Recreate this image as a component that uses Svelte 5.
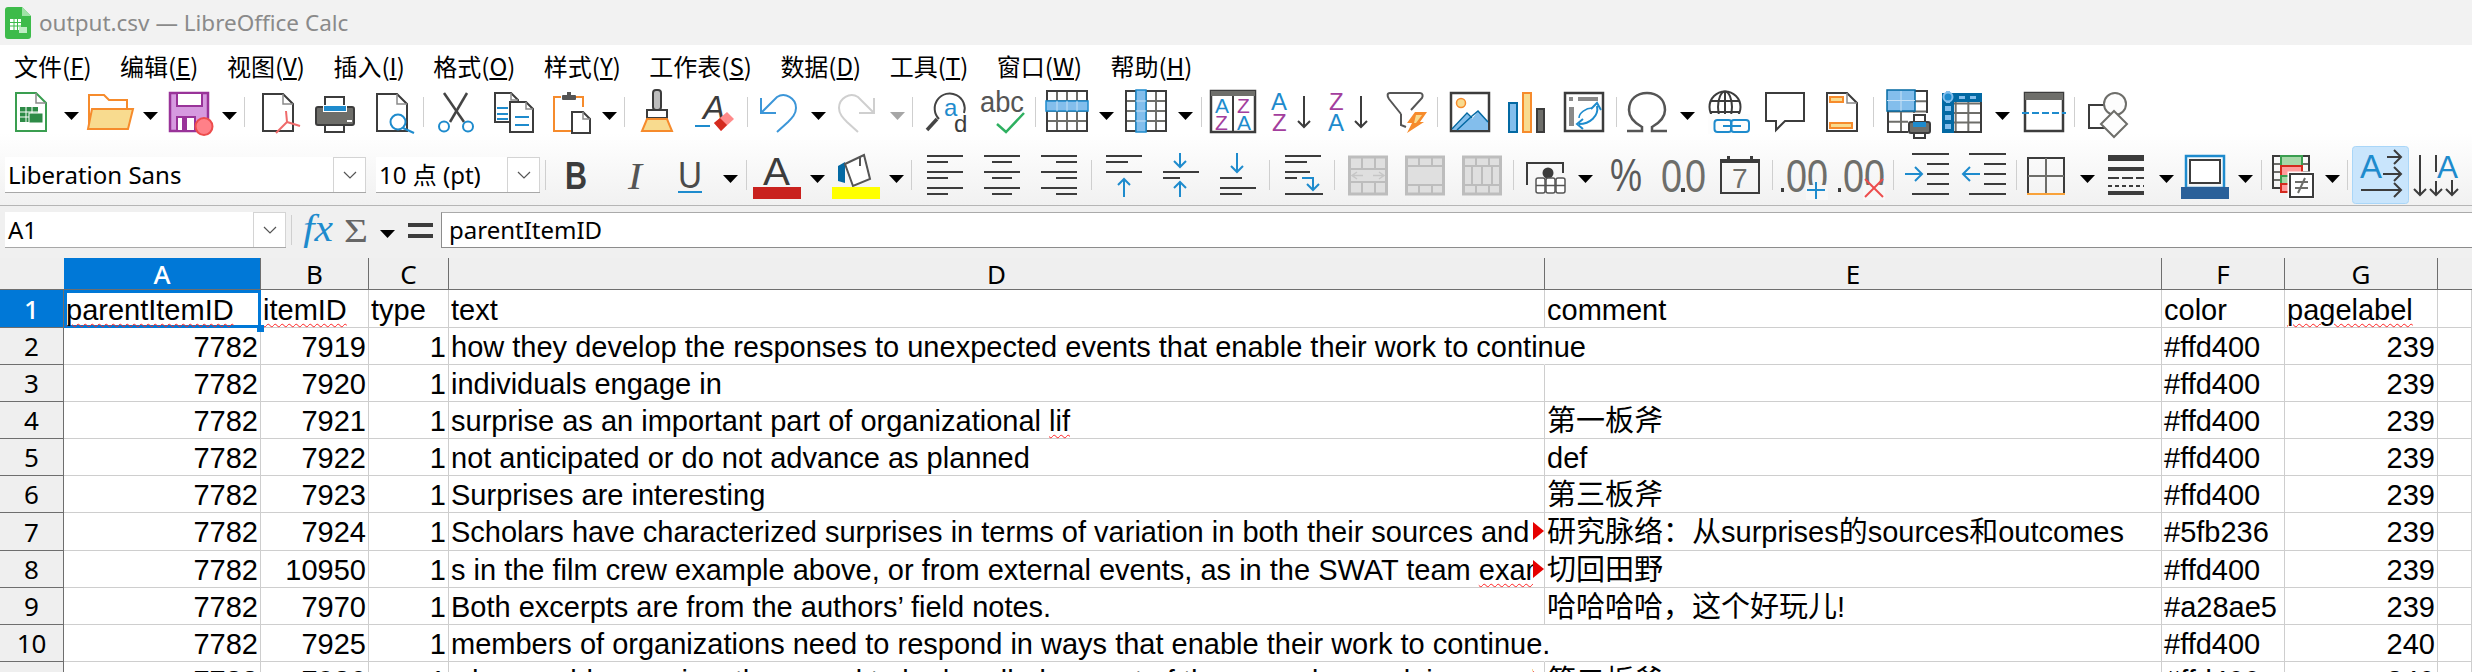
<script>
  const D = '#3c3c3c', M = '#6e6e6a', B = '#1e8bcd', DB = '#0369a3', LB = '#83beec';
  const O = '#f68b2c', LO = '#f8db8f', R = '#ed4c4c', P = '#a33e9d', GR = '#bdbdbd';

  const line = (x1, y1, x2, y2, c = D, w = 2) =>
    `<line x1="${x1}" y1="${y1}" x2="${x2}" y2="${y2}" stroke="${c}" stroke-width="${w}"/>`;
  const path = (d, c = D, w = 2, f = 'none') =>
    `<path d="${d}" stroke="${c}" stroke-width="${w}" fill="${f}"/>`;
  const rect = (x, y, w, h, c = 'none', sw = 0, f = 'none', r = 0) =>
    `<rect x="${x}" y="${y}" width="${w}" height="${h}" stroke="${c}" stroke-width="${sw}" fill="${f}" rx="${r}"/>`;
  const txt = (s, x, y, size, f = D, extra = '') =>
    `<text x="${x}" y="${y}" font-size="${size}" fill="${f}" font-family="Liberation Sans, sans-serif" ${extra}>${s}</text>`;
  const doc = (x0, y0, x1, y1, c = D, f = 'none', fold = 10) =>
    path(`M${x0} ${y0}H${x1 - fold}L${x1} ${y0 + fold}V${y1}H${x0}Z`, c, 2, f) +
    path(`M${x1 - fold} ${y0}V${y0 + fold}H${x1}`, '#8a8a8a', 1.5);
  const grid = (x, y, w, h, nx, ny, inner = M, outer = D) => {
    let s = '';
    for (let i = 1; i < nx; i++) s += line(x + (w * i) / nx, y, x + (w * i) / nx, y + h, inner);
    for (let i = 1; i < ny; i++) s += line(x, y + (h * i) / ny, x + w, y + (h * i) / ny, inner);
    return s + rect(x, y, w, h, outer, 2);
  };
  const hlines = (list) => list.map(([a, b, y]) => line(a, y, b, y)).join('');
  const arrowV = (x, y0, y1, c = B) => {
    const d = y1 > y0 ? -1 : 1;
    return line(x, y0, x, y1, c) + path(`M${x - 6} ${y1 + d * 6}L${x} ${y1}L${x + 6} ${y1 + d * 6}`, c);
  };
  const arrowH = (x0, x1, y, c = B) => {
    const d = x1 > x0 ? -1 : 1;
    return line(x0, y, x1, y, c) + path(`M${x1 + d * 7} ${y - 7}L${x1} ${y}L${x1 + d * 7} ${y + 7}`, c);
  };
  const mergeBase = (inner) => rect(1.5, 17, 37, 37, GR, 3, '#dfdfdf') + inner;
  const zero = (x, w = 21) => txt('0', x, 52, 46, M, `textLength="${w}" lengthAdjust="spacingAndGlyphs"`);

  const icons = {
    arr: `<polygon points="0,26 15,26 7.5,34" fill="#000"/>`,
    arrg: `<polygon points="0,26 15,26 7.5,34" fill="#a6a6a6"/>`,
    arr2: `<polygon points="0,35 15,35 7.5,43" fill="#000"/>`,
    sep: line(0.5, 11, 0.5, 41, '#cfcfcf', 1),
    sep2: line(0.5, 20, 0.5, 50, '#cfcfcf', 1),

    new:
      doc(1, 7, 31, 45, '#3a9e50', '#fff') +
      rect(5, 21, 18, 15, 'none', 0, '#2e8b47') +
      line(5, 26, 23, 26, '#fff', 1) + line(5, 31, 23, 31, '#fff', 1) +
      line(11, 21, 11, 36, '#fff', 1) + line(17, 21, 17, 36, '#fff', 1) +
      rect(14, 27, 14, 10, '#fff', 1, '#2e8b47'),
    open:
      path('M1 43V9H16L21 14H39V22', O, 2) +
      path('M4 23H45L40 43H0Z', O, 2, LO),
    save:
      rect(1, 7, 38, 38, '#993399', 2.5, '#d69adf') +
      rect(8, 7, 25, 13, '#993399', 2, '#fff') +
      rect(8, 31, 18, 14, '#993399', 2, '#fff') +
      rect(13, 32, 5, 13, 'none', 0, '#993399') +
      `<circle cx="35" cy="40.5" r="8.5" fill="#ff8088" stroke="#ed4c4c" stroke-width="2"/>`,
    pdf:
      doc(1, 8, 31, 45) +
      line(25, 36, 14, 47, '#ef6a6a') + line(25, 36, 38, 40, '#ef6a6a') + line(25, 36, 24, 25, '#ef6a6a'),
    print:
      rect(10, 11, 19, 12, D, 2, '#fff') +
      rect(1, 21, 38, 18, D, 2, M, 2) +
      rect(8, 19, 24, 7, 'none', 0, '#fff') + rect(9, 20, 22, 5, 'none', 0, B) +
      rect(10, 39, 19, 7, D, 2, '#fff') +
      rect(32, 34, 5, 2, 'none', 0, '#fff'),
    preview:
      doc(1, 8, 31, 45) +
      `<circle cx="22" cy="36" r="7.5" fill="#fff" stroke="${B}" stroke-width="2"/>` + line(27, 42, 38, 47, B),
    cut:
      line(6, 7, 26, 36, '#444', 2.5) + line(29, 7, 12, 36, '#444', 2.5) +
      `<circle cx="6" cy="40.5" r="5" fill="#fff" stroke="${B}" stroke-width="2"/>` +
      `<circle cx="30" cy="40.5" r="5" fill="#fff" stroke="${B}" stroke-width="2"/>`,
    copy:
      doc(1, 7, 24, 36, D, '#fff', 7) +
      line(3, 22, 14, 22, B) + line(3, 28, 14, 28, B) + line(3, 33, 14, 33, B) +
      doc(16, 16, 39, 46, D, '#fff', 7) +
      line(21, 31, 35, 31, B) + line(21, 39, 35, 39, B),
    paste:
      path('M8 11H1V45H18', O, 2) + path('M23 11H30V21', O, 2) +
      rect(9, 9, 14, 5, 'none', 0, '#555', 1) + rect(14, 6, 4, 4, 'none', 0, '#555') +
      doc(19, 26, 37, 47, D, '#fff', 7),
    clone:
      rect(11, 4, 8, 20, D, 2, GR, 3) +
      rect(5, 24, 20, 8, D, 2, '#fff') +
      path('M5 33H25L30 45H0Z', O, 2, LO),
    clear:
      txt('A', 8, 33, 33, D, 'font-style="italic"') +
      line(0, 40, 15, 40, B) +
      `<polygon points="19,37 32,26 39,33 26,45" fill="#ff8a8a"/>` +
      `<polygon points="19,37 25,32 32,39 26,45" fill="#d42a1e"/>`,
    undo:
      path('M1 12V27H16', '#3c96d8') + path('M1 27L17 11C25 6 36 12 36 22C36 28 32 32 28 36L17 46', '#3c96d8'),
    redo:
      path('M35 12V27H20', '#cfcfcf') + path('M35 27L19 11C11 6 0 12 0 22C0 28 4 32 8 36L19 46', '#cfcfcf'),
    find:
      path('M13 33A15 15 0 1 1 38 27', '#444', 2) +
      line(11, 33, 1, 44, '#444', 3.5) +
      txt('a', 18, 30, 24, B) + txt('d', 28, 46, 24, D),
    spell:
      txt('abc', 0, 26, 30, '#555', 'textLength="44" lengthAdjust="spacingAndGlyphs"') + path('M17 38L26 46L44 27', '#2eb060', 2.5),
    rowt:
      grid(1, 5, 40, 40, 4, 4) + rect(0, 15, 42, 10, B, 1.5, LB) + line(11, 15, 11, 25, '#c7e1f6', 1) + line(21, 15, 21, 25, '#c7e1f6', 1) + line(31, 15, 31, 25, '#c7e1f6', 1),
    colt:
      grid(1, 5, 40, 40, 4, 4) + rect(11, 4, 10, 42, B, 1.5, LB) + line(11, 15, 21, 15, '#c7e1f6', 1) + line(11, 25, 21, 25, '#c7e1f6', 1) + line(11, 35, 21, 35, '#c7e1f6', 1),
    autosort:
      rect(1, 5, 44, 41, D, 2.5, '#fff') + rect(1, 5, 44, 5, 'none', 0, M) +
      line(23, 10, 23, 46) +
      txt('A', 5, 27, 21, B) + txt('Z', 5, 44, 21, P) + txt('Z', 27, 27, 21, P) + txt('A', 27, 44, 21, B),
    sorta:
      txt('A', 0, 24, 24, B) + txt('Z', 1, 45, 24, P) + arrowV(33, 10, 41, D),
    sortd:
      txt('Z', 1, 24, 24, P) + txt('A', 0, 45, 24, B) + arrowV(33, 10, 41, D),
    filter:
      path('M3 7H33C36 7 36 10 35 12L24 24M14 28V39L19 41M14 28L2 13C0 10 0 7 3 7', '#555') +
      `<polygon points="28,26 40,26 33,36 37,36 20,47 25,37 20,37" fill="${O}"/>` +
      `<polygon points="29,29 35,29 29,37 27,37" fill="${LO}"/>`,
    image:
      rect(1, 7, 38, 38, D, 2.5, '#fff') +
      `<circle cx="11" cy="17" r="4.5" fill="${LO}" stroke="${O}" stroke-width="1.5"/>` +
      `<polygon points="2,44 17,28 22,33 28,25 38,36 38,44" fill="${LB}"/>` +
      path('M2 43L17 27L22 32M7 44L22 30L28 25L38 36', DB, 1.5),
    chart:
      rect(2, 17, 8, 29, DB, 2, LB) + rect(16, 7, 8, 39, O, 2, LO) + rect(30, 23, 7, 23, D, 2, M),
    pivot:
      rect(1, 7, 38, 38, D, 2.5, '#fff') +
      rect(5, 11, 4, 4, 'none', 0, '#8a8a8a') + rect(14, 11, 20, 4, 'none', 0, '#8a8a8a') +
      rect(5, 21, 5, 19, 'none', 0, '#8a8a8a') +
      path('M33 20C35 30 26 38 15 38', B) + path('M27 23L33 17L37 24', B) + path('M19 33L13 38L19 43', B) +
      path('M15 32C15 27 22 22 28 22', B, 1.5),
    omega:
      path('M0 45H15V41C6 36 2 30 2 24C2 13 10 7 20 7C30 7 38 13 38 24C38 30 34 36 25 41V45H40', '#555', 2.5),
    link:
      `<circle cx="17" cy="21" r="15.5" fill="none" stroke="${D}" stroke-width="2"/>` +
      `<ellipse cx="17" cy="21" rx="7" ry="15.5" fill="none" stroke="${D}" stroke-width="2"/>` +
      line(2, 15, 32, 15) + line(2, 26, 32, 26) + line(17, 6, 17, 34) +
      rect(0, 28, 42, 20, 'none', 0, '#fdfdfd') +
      rect(6.5, 34, 17, 12, B, 2, 'none', 3) + rect(23, 34, 18, 12, B, 2, 'none', 3) + line(15, 40, 33, 40, B),
    comment:
      path('M1 7H39V35H20L11 44V35H1Z', D, 2, '#fff'),
    header:
      doc(1, 7, 31, 45) +
      rect(4, 11, 13, 5, O, 2, LO) + rect(4, 37, 22, 5, O, 2, LO),
    printarea:
      grid(1, 5, 39, 41, 3, 4) +
      rect(0, 4, 28, 21, DB, 1.5, LB) + line(14, 5, 14, 25, '#c7e1f6', 1) + line(0, 14.5, 28, 14.5, '#c7e1f6', 1) +
      rect(21, 27, 22, 24, 'none', 0, '#fdfdfd') +
      rect(27, 29, 11, 9, D, 2, '#fff') + rect(22, 36, 21, 11, D, 2, M, 2) + rect(26, 36, 13, 5, 'none', 0, B) + rect(27, 47, 11, 5, D, 2, '#fff'),
    freeze:
      grid(1, 8, 38, 38, 3, 4) +
      rect(0, 7, 40, 9, 'none', 0, DB) + rect(0, 7, 12, 40, 'none', 0, DB) +
      [17, 28].map((x) => rect(x, 10, 6, 3, 'none', 0, LB)).join('') +
      [20, 29, 38].map((y) => rect(3, y, 6, 5, 'none', 0, LB)).join('') +
      rect(4, 5, 4, 12, 'none', 0, LB) +
      `<circle cx="6" cy="11" r="4.5" fill="${B}" stroke="#83beec" stroke-width="2"/>`,
    split:
      rect(3, 7, 38, 38, D, 2.5, '#fff') + rect(3, 7, 38, 7, 'none', 0, M) +
      `<line x1="0" y1="27" x2="44" y2="27" stroke="${B}" stroke-width="2" stroke-dasharray="7 3"/>`,
    shapes:
      rect(1, 19, 22, 23, D, 2, 'none') +
      `<circle cx="27" cy="18" r="11" fill="#fdfdfd" stroke="${M}" stroke-width="2"/>` +
      `<polygon points="26,25 39,38 26,51 13,38" fill="#fdfdfd" stroke="${M}" stroke-width="2"/>`,

    bold: txt('B', 0, 49, 38, D, 'font-weight="bold" textLength="22" lengthAdjust="spacingAndGlyphs"'),
    ital: txt('I', 0, 49, 38, '#555', 'font-style="italic" style="font-family:Liberation Serif,serif" textLength="14" lengthAdjust="spacingAndGlyphs"'),
    under:
      txt('U', 0, 48, 36, '#4a4a4a', 'textLength="24" lengthAdjust="spacingAndGlyphs"') + line(0, 52, 24, 52, B),
    fcolor:
      txt('A', 10, 45, 39, D, 'textLength="27" lengthAdjust="spacingAndGlyphs"') + rect(0, 47, 48, 12, 'none', 0, '#c9211e'),
    hcolor:
      `<polygon points="6,26 13,22 13,43 6,41" fill="${DB}"/>` +
      `<polygon points="13,24 32,15 38,39 21,46" fill="#fff" stroke="#555" stroke-width="2"/>` +
      path('M28 16V26', '#555') +
      rect(0, 47, 48, 12, 'none', 0, '#ffff00'),
    left: hlines([[0, 36, 16], [0, 21, 22], [0, 36, 32], [0, 21, 38], [0, 36, 48], [0, 21, 54]]),
    center: hlines([[0, 36, 16], [8, 28, 22], [0, 36, 32], [8, 28, 38], [0, 36, 48], [8, 28, 54]]),
    right: hlines([[0, 36, 16], [15, 36, 22], [0, 36, 32], [15, 36, 38], [0, 36, 48], [15, 36, 54]]),
    vtop: hlines([[0, 36, 16], [0, 22, 22], [0, 36, 32]]) + arrowV(18, 57, 39),
    vmid: hlines([[0, 36, 32], [0, 17, 38]]) + arrowV(17, 13, 27) + arrowV(17, 57, 42),
    vbot: hlines([[0, 22, 38], [0, 36, 48], [0, 22, 54]]) + arrowV(17, 13, 32),
    wrap:
      hlines([[0, 36, 16], [0, 22, 22], [0, 25, 32], [0, 12, 38], [0, 38, 54]]) +
      path('M17 38H28V49', B) + path('M22 44L28 50L34 44', B),
    merge1: mergeBase(
      line(2, 29, 38, 29, GR, 2) + line(2, 42, 38, 42, GR, 2) +
      line(14, 18, 14, 29, GR, 2) + line(27, 18, 27, 29, GR, 2) + line(14, 42, 14, 54, GR, 2) + line(27, 42, 27, 54, GR, 2) +
      path('M9 32L4 35.5L9 39M4 35.5H15M31 32L36 35.5L31 39M36 35.5H25', '#c6c6c6', 1.5)),
    merge2: mergeBase(
      line(2, 26, 38, 26, GR, 2) + line(2, 45, 38, 45, GR, 2) +
      line(14, 18, 14, 26, GR, 2) + line(27, 18, 27, 26, GR, 2) + line(14, 45, 14, 54, GR, 2) + line(27, 45, 27, 54, GR, 2)),
    merge3: mergeBase(
      line(2, 26, 38, 26, GR, 2) + line(2, 45, 38, 45, GR, 2) +
      line(14, 18, 14, 26, GR, 2) + line(27, 18, 27, 26, GR, 2) + line(14, 45, 14, 54, GR, 2) + line(27, 45, 27, 54, GR, 2) +
      line(10, 26, 10, 45, GR, 2) + line(20, 26, 20, 45, GR, 2) + line(30, 26, 30, 45, GR, 2)),
    money:
      path('M1 45V23H37V33', D, 2) +
      `<circle cx="22" cy="33" r="5.5" fill="${D}"/>` +
      rect(10, 38, 9, 15, '#555', 1.5, '#fff', 2) + rect(20, 38, 9, 15, '#555', 1.5, '#fff', 2) + rect(30, 38, 9, 15, '#555', 1.5, '#fff', 2) +
      line(10, 45.5, 39, 45.5, '#555', 1.5),
    percent: txt('%', 0, 51, 46, '#5a5a5a', 'textLength="32" lengthAdjust="spacingAndGlyphs"'),
    number: zero(0) + zero(24) + rect(20, 48, 4, 4, 'none', 0, D),
    date:
      rect(1, 20, 38, 33, D, 2, 'none') + rect(1, 19, 38, 4, 'none', 0, D) +
      rect(7, 16, 3, 6, 'none', 0, D) + rect(30, 16, 3, 6, 'none', 0, D) +
      txt('7', 12, 48, 28, M),
    adddec:
      rect(0, 48, 3, 4, 'none', 0, D) + zero(5) + zero(26) +
      rect(25, 45, 22, 15, 'none', 0, '#f7f7f7') +
      line(35, 42, 35, 59, B) + line(26, 50, 44, 50, B),
    deldec:
      rect(0, 48, 3, 4, 'none', 0, D) + zero(5) + zero(26) +
      rect(25, 45, 22, 15, 'none', 0, '#f7f7f7') +
      line(27, 39, 45, 57, R) + line(45, 39, 27, 57, R),
    indent:
      hlines([[7, 44, 14], [22, 44, 24], [22, 44, 34], [22, 44, 44], [7, 44, 54]]) + arrowH(0, 17, 34),
    outdent:
      hlines([[7, 44, 14], [22, 44, 24], [22, 44, 34], [22, 44, 44], [7, 44, 54]]) + arrowH(18, 1, 34),
    border:
      rect(1, 18, 36, 36, D, 2) + line(19, 18, 19, 54, M) + line(1, 36, 37, 36, M) + line(0, 54, 38, 54, '#f9a23a', 2),
    lines:
      rect(0, 15, 36, 6, 'none', 0, D) + rect(0, 27, 36, 4, 'none', 0, D) +
      `<line x1="0" y1="38" x2="36" y2="38" stroke="${D}" stroke-width="2" stroke-dasharray="11 3"/>` +
      `<line x1="0" y1="46" x2="36" y2="46" stroke="${D}" stroke-width="2" stroke-dasharray="4 3"/>` +
      rect(0, 51, 36, 4, 'none', 0, D),
    bcolor:
      rect(5, 16, 38, 32, B, 2.5) + rect(9, 20, 30, 23, D, 2, '#fff') + rect(0, 47, 48, 12, 'none', 0, '#2a6099'),
    cond:
      grid(1, 16, 36, 32, 3, 4) +
      rect(9, 16, 21, 10, '#3a9e50', 2, '#a6d8a8') + rect(9, 26, 21, 10, '#d42a1e', 2, '#ff9c9c') +
      rect(9, 36, 21, 8, '#3a9e50', 2, '#a6d8a8') + rect(9, 44, 21, 8, '#d42a1e', 2, '#ff9c9c') +
      rect(17, 33, 24, 24, '#fdfdfd', 3, '#fdfdfd') + rect(18, 34, 23, 23, D, 2, '#fff') +
      line(23, 42, 36, 42, M) + line(23, 48, 36, 48, M) + line(33, 38, 26, 53, M),
    textdir:
      rect(0.5, 6.5, 56, 57, '#a9d6f8', 1, '#c9e5fc', 3) +
      txt('A', 8, 38, 33, B, 'textLength="22" lengthAdjust="spacingAndGlyphs"') +
      arrowH(35, 49, 17, D) + arrowH(31, 49, 34, D) + arrowH(9, 49, 50, D),
    textvert:
      arrowV(7, 15, 55, D) +
      path('M23 15V32M23 41V55M17 49L23 55L29 49', D) +
      arrowV(39, 40, 55, D) +
      txt('A', 24, 38, 32, B, 'textLength="21" lengthAdjust="spacingAndGlyphs"'),
  };

  const row1 = [
    ['new', 15, 47], ['arr', 64, 79], ['open', 88, 134], ['arr', 143, 158], ['save', 169, 213], ['arr', 222, 237],
    ['sep', 244, 245], ['pdf', 262, 300], ['print', 315, 355], ['preview', 376, 414], ['sep', 423, 424],
    ['cut', 438, 475], ['copy', 494, 533], ['paste', 553, 591], ['arr', 602, 617], ['sep', 624, 625],
    ['clone', 642, 672], ['clear', 695, 735], ['sep', 747, 748], ['undo', 760, 796], ['arr', 811, 826],
    ['redo', 839, 875], ['arrg', 890, 905], ['sep', 912, 913], ['find', 926, 968], ['spell', 980, 1025],
    ['sep', 1035, 1036], ['rowt', 1046, 1088], ['arr', 1099, 1114], ['colt', 1125, 1167], ['arr', 1178, 1193],
    ['sep', 1201, 1202], ['autosort', 1210, 1256], ['sorta', 1271, 1313], ['sortd', 1328, 1370], ['filter', 1387, 1427],
    ['sep', 1437, 1438], ['image', 1450, 1490], ['chart', 1507, 1545], ['pivot', 1564, 1604], ['sep', 1616, 1617],
    ['omega', 1627, 1667], ['arr', 1680, 1695], ['link', 1708, 1750], ['comment', 1765, 1805], ['header', 1826, 1858],
    ['sep', 1873, 1874], ['printarea', 1887, 1930], ['freeze', 1942, 1982], ['arr', 1995, 2010], ['split', 2022, 2065],
    ['sep', 2074, 2075], ['shapes', 2088, 2128],
  ];

  const row2 = [
    ['font', 5, 366], ['size', 376, 540], ['sep2', 545, 546], ['bold', 565, 587], ['ital', 628, 642], ['under', 678, 702],
    ['arr2', 723, 738], ['sep2', 746, 747], ['fcolor', 753, 801], ['arr2', 810, 825], ['hcolor', 832, 880], ['arr2', 889, 904],
    ['sep2', 911, 912], ['left', 927, 963], ['center', 984, 1020], ['right', 1041, 1077], ['sep2', 1091, 1092],
    ['vtop', 1106, 1142], ['vmid', 1163, 1199], ['vbot', 1220, 1256], ['sep2', 1269, 1270], ['wrap', 1285, 1323],
    ['sep2', 1334, 1335], ['merge1', 1348, 1388], ['merge2', 1405, 1445], ['merge3', 1462, 1502], ['sep2', 1513, 1514],
    ['money', 1526, 1566], ['arr2', 1578, 1593], ['percent', 1610, 1642], ['number', 1661, 1705], ['date', 1720, 1760],
    ['sep2', 1772, 1773], ['adddec', 1781, 1827], ['deldec', 1838, 1884], ['sep2', 1893, 1894], ['indent', 1905, 1949],
    ['outdent', 1962, 2006], ['sep2', 2016, 2017], ['border', 2027, 2065], ['arr2', 2080, 2095], ['lines', 2108, 2144],
    ['arr2', 2159, 2174], ['bcolor', 2181, 2229], ['arr2', 2238, 2253], ['sep2', 2261, 2262], ['cond', 2272, 2314],
    ['arr2', 2325, 2340], ['sep2', 2347, 2348], ['textdir', 2352, 2409], ['textvert', 2413, 2460],
  ];

  const menu = [
    ['文件', 'F'], ['编辑', 'E'], ['视图', 'V'], ['插入', 'I'], ['格式', 'O'], ['样式', 'Y'],
    ['工作表', 'S'], ['数据', 'D'], ['工具', 'T'], ['窗口', 'W'], ['帮助', 'H'],
  ];

  const cols = ['A', 'B', 'C', 'D', 'E', 'F', 'G'];

  const rows = [
    { n: 2, b: 7919, d: 'how they develop the responses to unexpected events that enable their work to continue', over: true, f: '#ffd400', g: 239 },
    { n: 3, b: 7920, d: 'individuals engage in', f: '#ffd400', g: 239 },
    { n: 4, b: 7921, d: 'surprise as an important part of organizational ', sq: 'lif', e: '第一板斧', f: '#ffd400', g: 239 },
    { n: 5, b: 7922, d: 'not anticipated or do not advance as planned', e: 'def', f: '#ffd400', g: 239 },
    { n: 6, b: 7923, d: 'Surprises are interesting', e: '第三板斧', f: '#ffd400', g: 239 },
    { n: 7, b: 7924, d: 'Scholars have characterized surprises in terms of variation in both their sources and outcomes', clip: true, e: '研究脉络：从surprises的sources和outcomes', f: '#5fb236', g: 239 },
    { n: 8, b: 10950, d: 's in the film crew example above, or from external events, as in the SWAT team ', sq: 'example', clip: true, e: '切回田野', f: '#ffd400', g: 239 },
    { n: 9, b: 7970, d: 'Both excerpts are from the authors’ field notes.', e: '哈哈哈哈，这个好玩儿!', f: '#a28ae5', g: 239 },
    { n: 10, b: 7925, d: 'members of organizations need to respond in ways that enable their work to continue.', over: true, f: '#ffd400', g: 240 },
    { n: 11, b: 7926, d: 'when problems arise, they need to be handled as part of the everyday work in organizations', clip: true, e: '第二板斧', f: '#ffd400', g: 240 },
  ];

  const gapOf = (list, i) => (i === 0 ? list[0][1] : list[i][1] - list[i - 1][2]);
</script>

{#snippet toolrow(list, h)}
  {#each list as [id, x0, x1], i}
    {#if id === 'font' || id === 'size'}
      <div class="combo" style="margin-left:{gapOf(list, i)}px;width:{x1 - x0}px">
        <span class="combo-text">{id === 'font' ? 'Liberation Sans' : '10 点 (pt)'}</span>
        <span class="combo-btn">
          <svg width="14" height="8" viewBox="0 0 14 8"><path d="M1 1L7 7L13 1" stroke="#555" fill="none" stroke-width="1.2"/></svg>
        </span>
      </div>
    {:else}
      <svg class="tool" style="margin-left:{gapOf(list, i)}px" width={x1 - x0} height={h} viewBox="0 0 {x1 - x0} {h}">{@html icons[id]}</svg>
    {/if}
  {/each}
{/snippet}

<div class="page">
  <header class="titlebar">
    <svg width="26" height="32" viewBox="0 0 26 32">
      <path d="M3 0H17L26 9V29Q26 32 23 32H3Q0 32 0 29V3Q0 0 3 0Z" fill="#3dbb4a"/>
      <path d="M17 0L26 9H17Z" fill="#9fe3a6"/>
      <rect x="5" y="12" width="11" height="11" fill="#fff"/>
      <path d="M5 15.5H16M5 19H16M9 12V23M12.500 12V23" stroke="#3dbb4a" stroke-width="1"/>
      <rect x="14" y="20" width="8" height="6" fill="#bfeec4"/>
    </svg>
    <span>output.csv — LibreOffice Calc</span>
  </header>

  <nav class="menubar">
    {#each menu as [label, key]}
      <span class="menu-item">{label}(<u>{key}</u>)</span>
    {/each}
  </nav>

  <div class="toolbars">
    <div class="toolrow row1">{@render toolrow(row1, 54)}</div>
    <div class="toolrow row2">{@render toolrow(row2, 66)}</div>
  </div>

  <div class="formulabar">
    <div class="namebox">
      <span class="combo-text">A1</span>
      <span class="combo-btn">
        <svg width="14" height="8" viewBox="0 0 14 8"><path d="M1 1L7 7L13 1" stroke="#555" fill="none" stroke-width="1.2"/></svg>
      </span>
    </div>
    <i class="vsep"></i>
    <svg class="fx-icons" width="144" height="36" viewBox="0 0 144 36">
      <text x="6" y="29" font-size="38" fill={B} font-style="italic" font-family="Liberation Serif, serif" textLength="30" lengthAdjust="spacingAndGlyphs">fx</text>
      <text x="47" y="30" font-size="34" fill="#666" font-family="Liberation Serif, serif" textLength="24" lengthAdjust="spacingAndGlyphs">Σ</text>
      <polygon points="83,18 98,18 90.500,26" fill="#000"/>
      <rect x="111" y="11" width="25" height="4" fill={D}/>
      <rect x="111" y="22" width="25" height="4" fill={D}/>
    </svg>
    <div class="formula">parentItemID</div>
  </div>

  <div class="sheet">
    <div class="corner"></div>
    {#each cols as c, i}
      <div class="colhead" class:on={i === 0}>{c}</div>
    {/each}
    <div class="colhead"></div>

    <div class="rowhead on">1</div>
    <div class="cell first sel"><span class="sq">parentItemID</span></div>
    <div class="cell first"><span class="sq">itemID</span></div>
    <div class="cell first">type</div>
    <div class="cell first">text</div>
    <div class="cell first">comment</div>
    <div class="cell first">color</div>
    <div class="cell first"><span class="sq">pagelabel</span></div>
    <div class="cell"></div>

    {#each rows as r}
      <div class="rowhead">{r.n}</div>
      <div class="cell num">7782</div>
      <div class="cell num">{r.b}</div>
      <div class="cell num">1</div>
      <div class="cell" class:over={r.over} class:clip={r.clip}>
        {#if r.clip}
          <span class="clipped">{r.d}{#if r.sq}<span class="sq">{r.sq}</span>{/if}</span>
          <i class="more"></i>
        {:else}
          {r.d}{#if r.sq}<span class="sq">{r.sq}</span>{/if}
        {/if}
      </div>
      <div class="cell">{r.e ?? ''}</div>
      <div class="cell">{r.f}</div>
      <div class="cell num">{r.g}</div>
      <div class="cell"></div>
    {/each}
  </div>
</div>

<style>
  :global(body) {
    margin: 0;
    background: #fff;
  }

  .page {
    width: 2472px;
    height: 672px;
    overflow: hidden;
    display: flex;
    flex-direction: column;
    font-family: 'Liberation Sans', 'Noto Sans CJK SC', sans-serif;
  }

  .titlebar {
    height: 45px;
    flex: none;
    background: #f2f2f2;
    display: flex;
    align-items: center;
    gap: 8px;
    padding-left: 5px;
    box-sizing: border-box;
    color: #8a8a8a;
    font: 22.500px 'Noto Sans', sans-serif;
  }

  .menubar {
    height: 41px;
    flex: none;
    background: #fff;
    display: flex;
    align-items: center;
    font: 24px 'Noto Sans CJK SC', sans-serif;
    color: #000;
  }

  .menu-item {
    padding: 0 14.250px;
    white-space: nowrap;
  }

  .menu-item:first-child {
    padding-left: 14px;
  }

  .toolbars {
    flex: none;
    background: linear-gradient(#fff 40%, #f1f1f1 100%);
    border-bottom: 1px solid #b5b5b5;
  }

  .toolrow {
    display: flex;
    align-items: flex-start;
  }

  .row1 {
    height: 54px;
  }

  .row2 {
    height: 65px;
  }

  .tool {
    flex: none;
    overflow: visible;
  }

  .combo {
    flex: none;
    height: 36px;
    margin-top: 17px;
    background: #fff;
    border-bottom: 1px solid #a8a8a8;
    box-sizing: border-box;
    display: flex;
    font: 24px 'Noto Sans', 'Noto Sans CJK SC', sans-serif;
  }

  .combo-text {
    flex: 1;
    padding-left: 3px;
    line-height: 35px;
    white-space: nowrap;
    color: #000;
  }

  .combo-btn {
    flex: none;
    width: 33px;
    border: 1px solid #d4d4d4;
    border-bottom: 0;
    box-sizing: border-box;
    display: flex;
    align-items: center;
    justify-content: center;
  }

  .formulabar {
    flex: none;
    height: 42px;
    background: #f0f0f0;
    padding-top: 6px;
    box-sizing: border-box;
    display: flex;
    align-items: stretch;
  }

  .namebox {
    width: 281px;
    height: 36px;
    margin-left: 5px;
    background: #fff;
    border-bottom: 1px solid #a8a8a8;
    box-sizing: border-box;
    display: flex;
    font: 24px 'Noto Sans', sans-serif;
  }

  .vsep {
    width: 1px;
    height: 30px;
    margin: 3px 0 0 5px;
    background: #cfcfcf;
  }

  .fx-icons {
    flex: none;
    margin-left: 5px;
  }

  .formula {
    flex: 1;
    height: 36px;
    background: #fff;
    border: 1px solid #8c8c8c;
    border-right: 0;
    border-top-color: #aaa;
    box-sizing: border-box;
    padding-left: 7px;
    font: 24px/33px 'Noto Sans', sans-serif;
    color: #000;
  }

  .sheet {
    flex: none;
    background: #f0f0f0;
    padding-top: 10px;
    display: grid;
    grid-template-columns: 64px 197px 108px 80px 1096px 617px 123px 153px 34px;
    grid-template-rows: 32px 38px repeat(10, 37.1px);
    font-size: 29px;
    color: #000;
  }

  .corner,
  .colhead,
  .rowhead {
    background: #efefef;
    box-sizing: border-box;
    border-right: 1px solid #6e6e6e;
    border-bottom: 1px solid #6e6e6e;
    display: flex;
    align-items: center;
    justify-content: center;
    font: 26px 'Noto Sans', sans-serif;
    color: #000;
  }

  .corner {
    border-right: 0;
  }

  .colhead:nth-child(9) {
    border-right: 0;
  }

  .on {
    background: #0078d7;
    color: #fff;
    font-weight: 500;
  }

  .cell {
    background: #fff;
    box-sizing: border-box;
    border-right: 1px solid #cecece;
    border-bottom: 1px solid #cecece;
    padding: 0 2px 0 2px;
    white-space: nowrap;
    position: relative;
    line-height: 38px;
    min-width: 0;
  }

  .first {
    line-height: 41px;
  }

  .num {
    text-align: right;
  }

  .over {
    border-right-color: transparent;
    z-index: 1;
  }

  .clipped {
    display: block;
    overflow: hidden;
    width: 1082px;
  }

  .more {
    position: absolute;
    right: 0;
    top: 9px;
    width: 0;
    height: 0;
    border-left: 11px solid #e60000;
    border-top: 9px solid transparent;
    border-bottom: 9px solid transparent;
  }

  .sq {
    text-decoration: underline wavy #f22 1px;
    text-underline-offset: 3px;
  }

  .sel {
    box-shadow: inset 0 0 0 3px #0078d7;
    border: 0;
    z-index: 2;
  }

  .sel::after {
    content: '';
    position: absolute;
    right: -3px;
    bottom: -4px;
    width: 7px;
    height: 7px;
    background: #0078d7;
  }
</style>
